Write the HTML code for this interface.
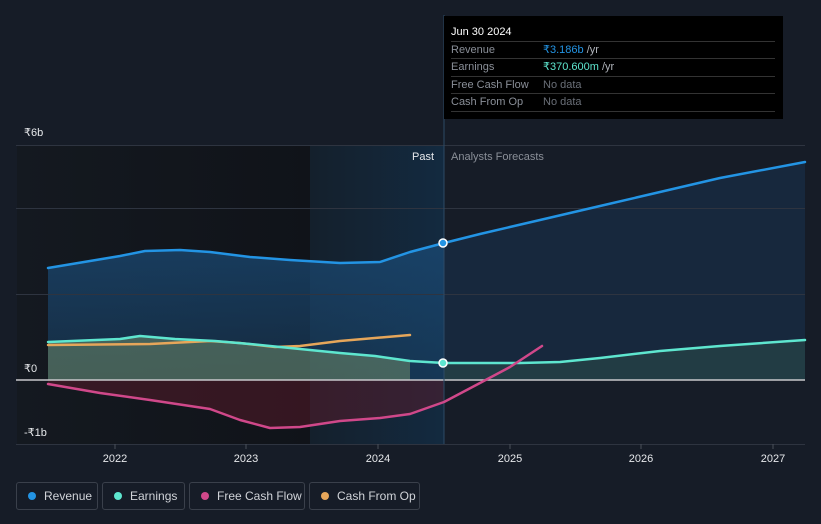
<!DOCTYPE html>
<html><head><meta charset="utf-8"><style>
html,body{margin:0;padding:0;background:#161c27;width:821px;height:524px;overflow:hidden;font-family:"Liberation Sans","DejaVu Sans",sans-serif;}
.lg{position:absolute;top:482px;height:28px;border:1px solid #3a404b;border-radius:3px;box-sizing:border-box;color:#d0d3d8;font-size:12px;line-height:26px;padding-left:27px}
.lg i{position:absolute;left:11px;top:9px;width:8px;height:8px;border-radius:50%}
</style></head><body>
<svg width="821" height="524" style="position:absolute;left:0;top:0" font-family="Liberation Sans, DejaVu Sans, sans-serif">
<defs>
<linearGradient id="dk" x1="0" x2="1"><stop offset="0" stop-color="#141920"/><stop offset="1" stop-color="#101319"/></linearGradient>
<linearGradient id="hl" x1="0" x2="1"><stop offset="0" stop-color="#14202c"/><stop offset="1" stop-color="#132a40"/></linearGradient>
<linearGradient id="rf" x1="0" y1="0" x2="0" y2="1"><stop offset="0" stop-color="#1a4a75" stop-opacity=".75"/><stop offset="1" stop-color="#1a4a75" stop-opacity=".4"/></linearGradient>
</defs>
<rect x="17" y="145" width="293" height="299" fill="url(#dk)"/>
<rect x="310" y="145" width="134" height="299" fill="url(#hl)"/>
<!-- revenue area -->
<path d="M48,268 L90,261 L120,256 L145,251 L180,250 L210,252 L250,257 L290,260 L340,263 L380,262 L410,252 L444,243 L444,380 L48,380Z" fill="url(#rf)"/>
<path d="M444,243 L480,234 L540,220 L600,206 L660,192 L720,178 L805,162 L805,380 L444,380Z" fill="#1a3350" fill-opacity=".55"/>
<!-- earnings/cfo area -->
<path d="M48,342 L120,339 L140,336 L175,339 L215,341 L250,344 L290,348 L340,353 L375,356 L410,361 L410,380 L48,380Z" fill="#6e8a6a" fill-opacity=".55"/>
<path d="M444,363 L520,363 L560,362 L600,358 L660,351 L720,346 L805,340 L805,380 L444,380Z" fill="#2a4a4a" fill-opacity=".6"/>
<!-- fcf area -->
<path d="M48,384 L100,393 L150,400 L210,409 L240,420 L270,428 L300,427 L340,421 L380,418 L410,414 L444,402 L444,380 L48,380Z" fill="#5a1a2a" fill-opacity=".5"/>
<!-- grid -->
<g stroke="#2e3440" stroke-width="1"><line x1="16" y1="145.5" x2="805" y2="145.5"/><line x1="16" y1="208.5" x2="805" y2="208.5"/><line x1="16" y1="294.5" x2="805" y2="294.5"/><line x1="16" y1="444.5" x2="805" y2="444.5"/></g>
<line x1="16" y1="380" x2="805" y2="380" stroke="#c8c8cc" stroke-width="1.5"/>
<line x1="444" y1="15" x2="444" y2="444" stroke="#2c4a66" stroke-width="1"/>
<g stroke="#4a505a"><line x1="115" y1="444" x2="115" y2="449"/><line x1="246" y1="444" x2="246" y2="449"/><line x1="378" y1="444" x2="378" y2="449"/><line x1="510" y1="444" x2="510" y2="449"/><line x1="641" y1="444" x2="641" y2="449"/><line x1="773" y1="444" x2="773" y2="449"/></g>
<!-- lines -->
<g fill="none" stroke-width="2.5" stroke-linejoin="round" stroke-linecap="round">
<path d="M48,268 L90,261 L120,256 L145,251 L180,250 L210,252 L250,257 L290,260 L340,263 L380,262 L410,252 L444,243 L480,234 L540,220 L600,206 L660,192 L720,178 L805,162" stroke="#2394e4"/>
<path d="M48,345 L150,344 L210,341 L240,343 L275,347 L300,346 L340,341 L410,335" stroke="#e6a65a"/>
<path d="M48,342 L120,339 L140,336 L175,339 L215,341 L250,344 L290,348 L340,353 L375,356 L410,361 L444,363 L520,363 L560,362 L600,358 L660,351 L720,346 L805,340" stroke="#5ee6cf"/>
<path d="M48,384 L100,393 L150,400 L210,409 L240,420 L270,428 L300,427 L340,421 L380,418 L410,414 L444,402 L480,383 L510,367 L542,346" stroke="#d0488a"/>
</g>
<circle cx="443" cy="243" r="4" fill="#2394e4" stroke="#fff" stroke-width="1.5"/>
<circle cx="443" cy="363" r="4" fill="#5ee6cf" stroke="#fff" stroke-width="1.5"/>
<g font-size="11" fill="#e6e8eb"><text x="24" y="136">₹6b</text><text x="24" y="372">₹0</text><text x="24" y="436">-₹1b</text></g>
<text x="412" y="160" font-size="11" fill="#e6e8eb">Past</text>
<text x="451" y="160" font-size="11" fill="#8a8f98">Analysts Forecasts</text>
<g font-size="11" fill="#e6e8eb" text-anchor="middle"><text x="115" y="462">2022</text><text x="246" y="462">2023</text><text x="378" y="462">2024</text><text x="510" y="462">2025</text><text x="641" y="462">2026</text><text x="773" y="462">2027</text></g>
<!-- tooltip -->
<rect x="444" y="16" width="339" height="103" fill="#000"/>
<text x="451" y="35" font-size="11" fill="#fff">Jun 30 2024</text>
<g stroke="#333" stroke-width="1"><line x1="451" y1="41.5" x2="775" y2="41.5"/><line x1="451" y1="58.5" x2="775" y2="58.5"/><line x1="451" y1="76.5" x2="775" y2="76.5"/><line x1="451" y1="93.5" x2="775" y2="93.5"/><line x1="451" y1="111.5" x2="775" y2="111.5"/></g>
<g font-size="11" fill="#8a8f98"><text x="451" y="53">Revenue</text><text x="451" y="70">Earnings</text><text x="451" y="88">Free Cash Flow</text><text x="451" y="105">Cash From Op</text><text x="543" y="88" fill="#6a6f78">No data</text><text x="543" y="105" fill="#6a6f78">No data</text></g>
<text x="543" y="53" font-size="11" fill="#2394e4">₹3.186b <tspan fill="#b0b4bb">/yr</tspan></text>
<text x="543" y="70" font-size="11" fill="#5ee6cf">₹370.600m <tspan fill="#b0b4bb">/yr</tspan></text>
</svg>
<div class="lg" style="left:16px;width:82px"><i style="background:#2394e4"></i>Revenue</div>
<div class="lg" style="left:102px;width:83px"><i style="background:#5ee6cf"></i>Earnings</div>
<div class="lg" style="left:189px;width:116px"><i style="background:#d0488a"></i>Free Cash Flow</div>
<div class="lg" style="left:309px;width:111px"><i style="background:#e6a65a"></i>Cash From Op</div>
</body></html>
